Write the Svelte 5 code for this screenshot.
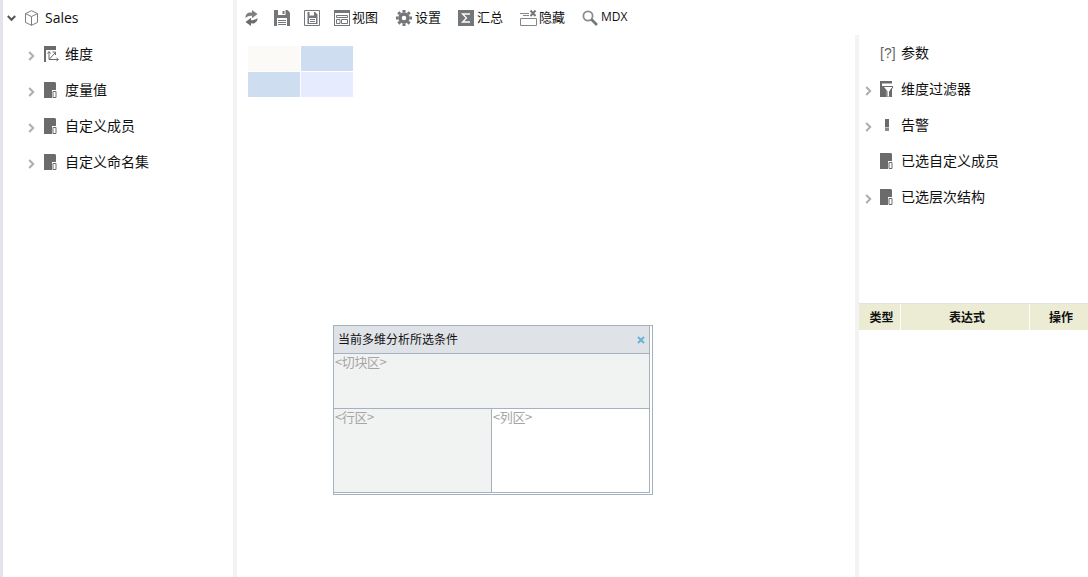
<script>
  const treeRows = [
    { label: '维度', icon: 'dim' },
    { label: '度量值', icon: 'doc' },
    { label: '自定义成员', icon: 'doc' },
    { label: '自定义命名集', icon: 'doc' },
  ];

  const sideRows = [
    { label: '参数', icon: 'param', arrow: false },
    { label: '维度过滤器', icon: 'filter', arrow: true },
    { label: '告警', icon: 'alert', arrow: true },
    { label: '已选自定义成员', icon: 'doc', arrow: false },
    { label: '已选层次结构', icon: 'doc', arrow: true },
  ];
</script>

{#snippet chevron()}
  <svg class="chevron" width="7" height="10" viewBox="0 0 7 10">
    <path d="M1.2 1 L5.2 5 L1.2 9" fill="none" stroke="#aeaeae" stroke-width="2" />
  </svg>
{/snippet}

{#snippet rowIcon(name)}
  <svg class="row-icon" width="12" height="16" viewBox="0 0 12 16">
    {#if name === 'doc'}
      <path d="M0 0 H11 L12 1 V8 H8 V16 H0 Z" fill="#6b6b6b" />
      <path d="M9 9.5 H12 V15.5 H9 Z" fill="#fff" stroke="#6b6b6b" />
    {:else if name === 'dim'}
      <path d="M0 0 H12 V4 H2 V16 H0 Z" fill="#6b6b6b" />
      <path d="M5 6 V13.5 H14 M3.5 7.5 L5 5.5 L6.5 7.5 M12.5 12 L14.5 13.5 L12.5 15 M5.5 13 L11.5 6.5 M8.5 6 H11.5 V9" fill="none" stroke="#6b6b6b" />
    {:else if name === 'filter'}
      <path d="M0 0 H12 V16 H0 Z" fill="#6b6b6b" />
      <path d="M2 2.5 H14 V4.5 L10 9 V15.5 H6.5 V9 L2 4.5 Z" fill="#fff" />
      <path d="M3 5.5 H13 M6 9.5 L3.5 6 M10.5 9.5 L13 6 M7 10 V15.5 M9.5 10 V15.5" fill="none" stroke="#6b6b6b" />
    {:else if name === 'alert'}
      <path d="M5 2 H9 V10 H5 Z" fill="#6b6b6b" />
      <path d="M5 10 H9 V11 H5 Z" fill="#c4c4c4" />
      <path d="M5 11 H9 V14 H5 Z" fill="#8a8a8a" />
    {/if}
  </svg>
{/snippet}

<div class="app">
  <aside class="tree">
    <div class="tree-root">
      <svg class="root-chevron" width="9" height="7" viewBox="0 0 9 7">
        <path d="M0.8 1 L4.5 4.8 L8.2 1" fill="none" stroke="#555" stroke-width="2" />
      </svg>
      <svg class="cube" width="13" height="16" viewBox="0 0 13 16">
        <path d="M6.5 0.7 L12.5 3.6 V12.4 L6.5 15.3 L0.5 12.4 V3.6 Z M0.5 3.6 L6.5 6.6 L12.5 3.6 M6.5 6.6 V15.3" fill="none" stroke="#7d7d7d" />
      </svg>
      <span class="root-label">Sales</span>
    </div>
    {#each treeRows as row}
      <div class="tree-row">
        {@render chevron()}
        {@render rowIcon(row.icon)}
        <span class="txt">{row.label}</span>
      </div>
    {/each}
  </aside>

  <main class="main">
    <nav class="toolbar">
      <button class="tool first" aria-label="刷新">
        <svg width="13" height="16" viewBox="0 0 14 15" preserveAspectRatio="none">
          <path d="M0.5 7.5 C0.5 3.5 3.5 2 7.5 2.5 V0 L13.5 3.8 L7.5 7.8 V5.5 C5 5.2 3 5.8 0.5 7.5 Z" fill="#7c7f82" />
          <path d="M13.5 7.5 C13.5 11.5 10.5 13 6.5 12.5 V15 L0.5 11.2 L6.5 7.2 V9.5 C9 9.8 11 9.2 13.5 7.5 Z" fill="#6a6d70" />
        </svg>
      </button>
      <button class="tool save" aria-label="保存">
        <svg width="16" height="16" viewBox="0 0 16 16">
          <path d="M0 0 H13.5 L16 2.5 V16 H0 Z" fill="#74777a" />
          <path d="M4 0 H11.5 V5 H4 Z M3 8 H13 V16 H3 Z" fill="#fff" />
          <path d="M4 10.5 H12 M4 12.5 H12 M4 14.5 H12" stroke="#74777a" />
          <path d="M8.5 1 H10.5 V4 H8.5 Z" fill="#74777a" />
        </svg>
      </button>
      <button class="tool saveas" aria-label="另存为">
        <svg width="16" height="16" viewBox="0 0 16 16">
          <path d="M0.5 0.5 H15.5 V15.5 H0.5 Z" fill="#fff" stroke="#74777a" />
          <path d="M3.5 2 H11 L13.5 4.5 V14 H3.5 Z" fill="#74777a" />
          <path d="M5.5 2 H10 V5.5 H5.5 Z M5 8 H12 V13 H5 Z" fill="#fff" />
          <path d="M6 9.5 H11 M6 11.5 H11" stroke="#74777a" />
        </svg>
      </button>
      <button class="tool view">
        <svg width="16" height="16" viewBox="0 0 16 16">
          <path d="M0 0 H16 V16 H0 Z" fill="#74777a" />
          <path d="M1 3 H15 V15 H1 Z" fill="#fff" />
          <path d="M2.5 5.5 H13.5 V7.5 H2.5 Z M2.5 9.5 H6 V13.5 H2.5 Z M7.5 9.5 H13.5 V13.5 H7.5 Z" fill="none" stroke="#74777a" />
        </svg>
        <span class="txt">视图</span>
      </button>
      <button class="tool setting">
        <svg width="16" height="16" viewBox="0 0 16 16">
          <circle cx="8" cy="8" r="4" fill="none" stroke="#74777a" stroke-width="3.4" />
          <path d="M8 0 V16 M0 8 H16 M2.3 2.3 L13.7 13.7 M13.7 2.3 L2.3 13.7" stroke="#74777a" stroke-width="3" stroke-dasharray="2.6 10.8" />
        </svg>
        <span class="txt">设置</span>
      </button>
      <button class="tool sum">
        <svg width="16" height="16" viewBox="0 0 16 16">
          <path d="M0 0 H16 V16 H0 Z" fill="#74777a" />
          <path d="M12 4 H4.5 L8.5 8 L4.5 12 H12" fill="none" stroke="#fff" stroke-width="1.3" />
        </svg>
        <span class="txt">汇总</span>
      </button>
      <button class="tool hide">
        <svg width="17" height="16" viewBox="0 0 17 16">
          <path d="M0.5 8.5 H16.5 V15.5 H0.5 Z" fill="none" stroke="#85888b" />
          <path d="M0 3.5 H9 M3 5.5 H9" stroke="#85888b" />
          <path d="M10.5 0.5 L15.5 6 M15.5 0.5 L10.5 6" stroke="#74777a" stroke-width="2" />
        </svg>
        <span class="txt">隐藏</span>
      </button>
      <button class="tool mdx">
        <svg width="16" height="16" viewBox="0 0 16 16">
          <circle cx="6" cy="6" r="4.6" fill="none" stroke="#8a8d90" stroke-width="1.8" />
          <path d="M9.5 9.5 L15 15" stroke="#74777a" stroke-width="2.6" />
        </svg>
        <span class="latin">MDX</span>
      </button>
    </nav>

    <div class="body">
      <section class="canvas">
        <div class="pivot">
          <div class="corner"></div>
          <div class="head"></div>
          <div class="head"></div>
          <div class="data"></div>
        </div>

        <div class="dialog">
          <div class="dialog-inner">
            <header class="dialog-title">
              <span class="txt">当前多维分析所选条件</span>
              <svg width="8" height="8" viewBox="0 0 8 8">
                <path d="M1 1 L7 7 M7 1 L1 7" stroke="#6ab2d6" stroke-width="2" />
              </svg>
            </header>
            <div class="slice zone">&lt;切块区&gt;</div>
            <div class="axes">
              <div class="rows zone">&lt;行区&gt;</div>
              <div class="cols zone">&lt;列区&gt;</div>
            </div>
          </div>
        </div>
      </section>

      <aside class="side">
        <div class="side-list">
          {#each sideRows as row}
            <div class="side-row">
              <span class="arrow-slot">
                {#if row.arrow}{@render chevron()}{/if}
              </span>
              {#if row.icon === 'param'}
                <span class="param-icon">[?]</span>
              {:else}
                {@render rowIcon(row.icon)}
              {/if}
              <span class="txt">{row.label}</span>
            </div>
          {/each}
        </div>
        <div class="table-head">
          <div>类型</div>
          <div>表达式</div>
          <div>操作</div>
        </div>
      </aside>
    </div>
  </main>
</div>

<style>
  :global(body) {
    background: #fff;
    overflow: hidden;
  }

  .app {
    display: flex;
    height: 577px;
    width: 1088px;
    overflow: hidden;
    color: #111;
    font-family: "Noto Sans CJK SC", "Open Sans", sans-serif;
    font-size: 14px;
  }

  .txt {
    padding-bottom: 2px;
  }

  .tree {
    box-sizing: border-box;
    width: 237px;
    flex: none;
    border-left: 3px solid #e3e3f0;
    border-right: 4px solid #f3f3f3;
  }

  .tree-root {
    display: flex;
    align-items: center;
    height: 36px;
    padding-left: 4px;
  }

  .root-chevron {
    margin-right: 9px;
  }

  .cube {
    margin-right: 7px;
  }

  .root-label {
    font-family: "Open Sans", sans-serif;
    font-size: 14px;
    padding-bottom: 2px;
  }

  .tree-row {
    display: flex;
    align-items: center;
    height: 36px;
    padding-left: 25px;
  }

  .chevron {
    flex: none;
    margin-top: 3px;
  }

  .row-icon {
    flex: none;
    overflow: visible;
  }

  .tree-row .row-icon {
    margin: 0 9px;
  }

  .main {
    flex: 1;
    min-width: 0;
    display: flex;
    flex-direction: column;
  }

  .toolbar {
    display: flex;
    align-items: center;
    height: 35px;
    flex: none;
  }

  .tool {
    display: flex;
    align-items: center;
    gap: 3px;
    border: 0;
    background: none;
    padding: 0;
    color: inherit;
    font: inherit;
    font-size: 13px;
  }

  .latin {
    font-family: "Open Sans", sans-serif;
    font-size: 12px;
    padding-bottom: 2px;
  }

  .first { margin-left: 8px; }
  .save { margin-left: 16px; }
  .saveas { margin-left: 14px; }
  .view { margin-left: 14px; gap: 2px; }
  .setting { margin-left: 18px; }
  .sum { margin-left: 17px; }
  .hide { margin-left: 17px; gap: 2px; }
  .mdx { margin-left: 17px; }

  .body {
    flex: 1;
    display: flex;
    min-height: 0;
  }

  .canvas {
    position: relative;
    flex: 1;
    min-width: 0;
    padding: 11px 0 0 11px;
  }

  .pivot {
    display: grid;
    grid-template-columns: 52px 52px;
    grid-template-rows: 25px 25px;
    gap: 1px;
  }

  .corner { background: #fbfaf6; }
  .head { background: #cedef0; }
  .data { background: #e6ebfd; }

  .dialog {
    position: absolute;
    left: 96px;
    top: 290px;
    box-sizing: border-box;
    width: 320px;
    height: 170px;
    border: 1px solid #a5b1bc;
    padding: 0 2px 1px 0;
  }

  .dialog-inner {
    height: 100%;
    box-sizing: border-box;
    display: flex;
    flex-direction: column;
    border-right: 1px solid #a5b1bc;
    border-bottom: 1px solid #a5b1bc;
  }

  .dialog-title {
    display: flex;
    align-items: center;
    justify-content: space-between;
    height: 27px;
    flex: none;
    padding: 0 4px;
    background: #dfe2e7;
    border-bottom: 1px solid #a5b1bc;
    font-size: 12px;
  }

  .zone {
    box-sizing: border-box;
    color: #a5a5a5;
    font-size: 13px;
    letter-spacing: -0.4px;
    line-height: 16px;
    padding-left: 1px;
  }

  .slice {
    height: 55px;
    flex: none;
    background: #f1f3f2;
    border-bottom: 1px solid #a5b1bc;
  }

  .axes {
    flex: 1;
    display: flex;
    min-height: 0;
  }

  .rows {
    width: 158px;
    flex: none;
    background: #f1f3f2;
    border-right: 1px solid #a5b1bc;
  }

  .cols {
    flex: 1;
    background: #fff;
  }

  .side {
    box-sizing: border-box;
    width: 233px;
    flex: none;
    border-left: 4px solid #f3f3f3;
  }

  .side-list {
    height: 268px;
  }

  .side-row {
    display: flex;
    align-items: center;
    height: 36px;
  }

  .arrow-slot {
    display: flex;
    width: 21px;
    padding-left: 6px;
    box-sizing: border-box;
  }

  .side-row .row-icon {
    margin-right: 9px;
  }

  .param-icon {
    width: 21px;
    padding-bottom: 1px;
    font-family: "Liberation Sans", sans-serif;
    font-size: 14px;
    color: #666;
  }

  .table-head {
    display: grid;
    grid-template-columns: 41px 128px 1fr;
    column-gap: 1px;
    height: 27px;
    border-top: 1px solid #e2e2e2;
    box-sizing: border-box;
    font-size: 12px;
    font-weight: 700;
    line-height: 26px;
    text-align: center;
  }

  .table-head div {
    background: #ececd4;
    padding-left: 4px;
  }
</style>
